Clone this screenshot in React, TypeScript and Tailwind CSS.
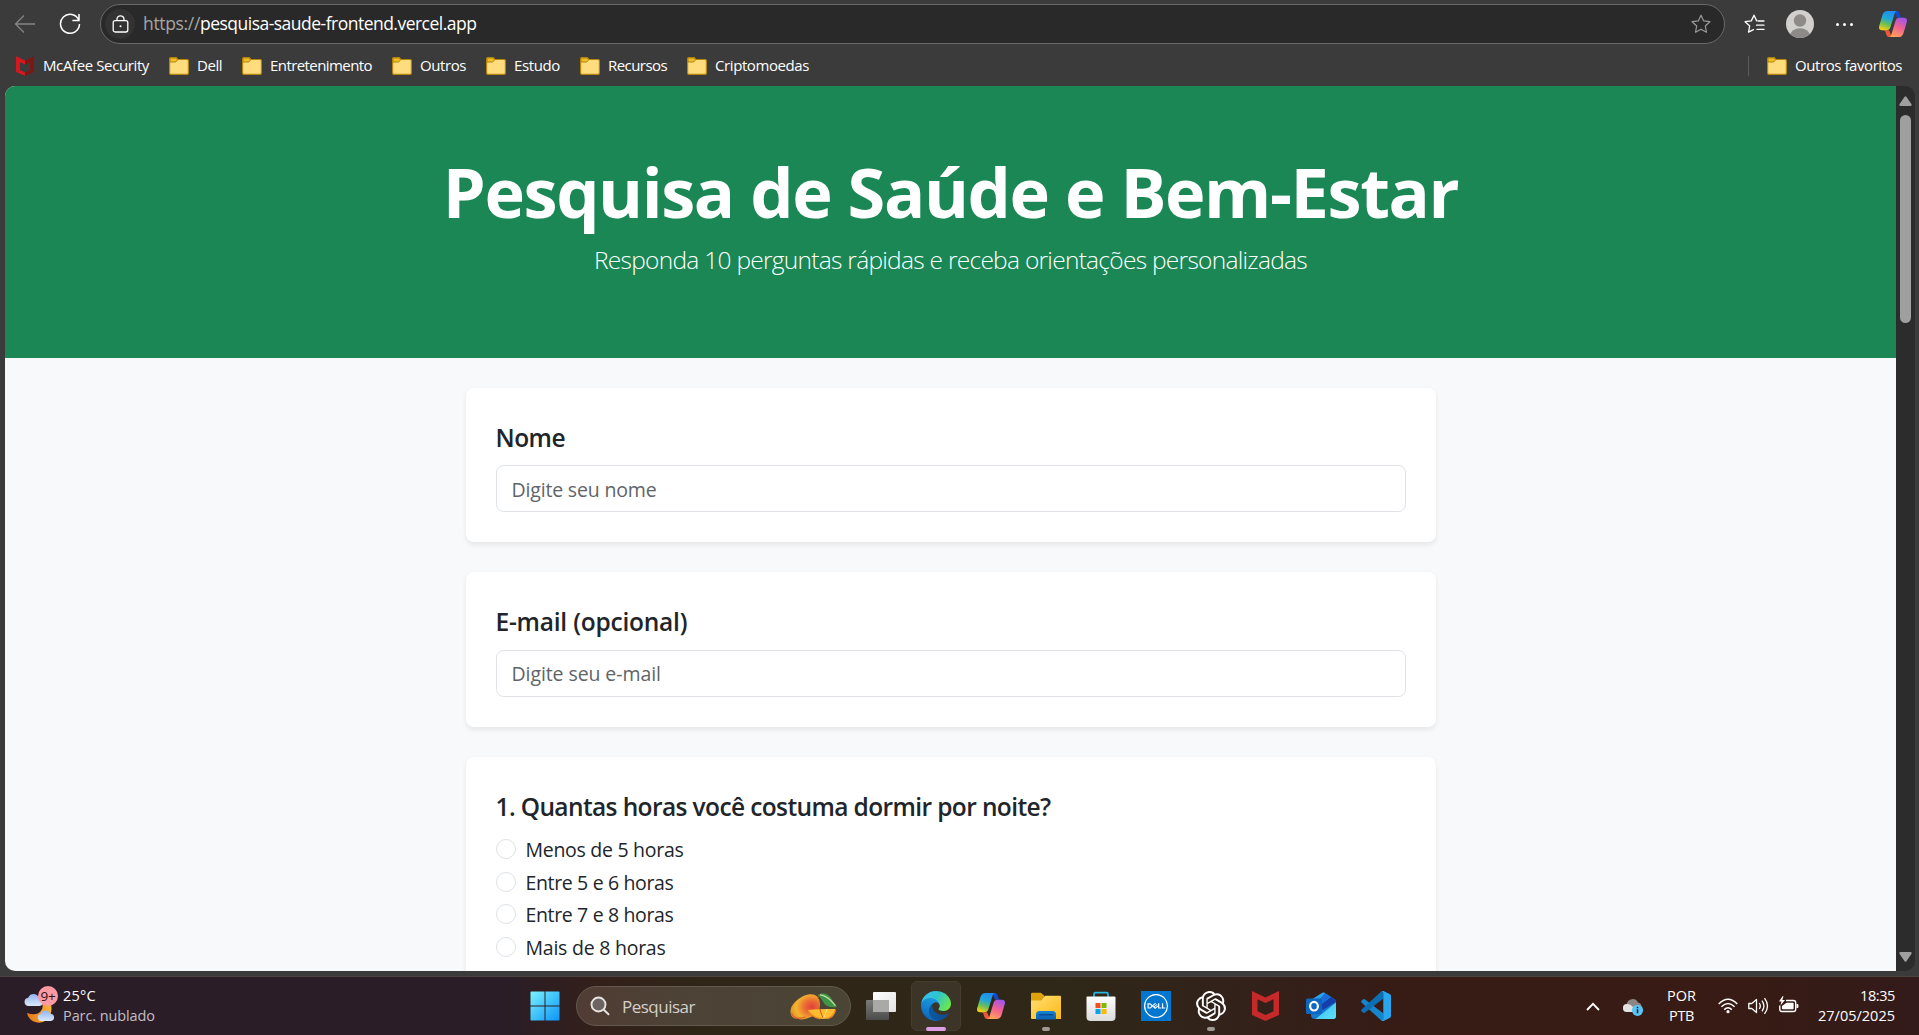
import type { ReactNode } from "react";
import { SiDell, SiOpenai } from "react-icons/si";

/* ---------- browser toolbar ---------- */

function Folder() {
  return (
    <svg width="20" height="18" viewBox="0 0 20 18" className="shrink-0">
      <path d="M.6 2q0-1.4 1.4-1.4h5.2l1.6 1.9H18q1.4 0 1.4 1.4V16q0 1.4-1.4 1.4H2Q.6 17.400.6 16Z" fill="#ffdc7d" stroke="#b3850c" strokeWidth="1.2" />
      <path d="M1 5V2q0-1 1-1h5l1.500 1.700L7.200 4.600Q6.900 5 6.300 5Z" fill="#f3bd24" stroke="#b3850c" strokeWidth="1" />
    </svg>
  );
}

function McAfeeSmall() {
  return (
    <svg width="18" height="20" viewBox="0 0 18 20" className="shrink-0">
      <path d="M0 .3 9 4.500v4L4 6.300v8L9 16.200V19.700L0 16Z" fill="#d3181f" />
      <path d="M18 .3 9 4.500v4l5-2.200v8L9 16.200V19.700L18 16Z" fill="#7d1714" />
    </svg>
  );
}

function Copilot({ size }: { size: number }) {
  return (
    <svg width={size} height={(size * 26) / 28} viewBox="0 0 28 26" className="shrink-0">
      <defs>
        <linearGradient id="cpA" x1="0.6" y1="0" x2="0.3" y2="1">
          <stop offset="0" stopColor="#1d8df2" />
          <stop offset="0.4" stopColor="#21a7d6" />
          <stop offset="0.7" stopColor="#6fbf52" />
          <stop offset="1" stopColor="#f4d016" />
        </linearGradient>
        <linearGradient id="cpB" x1="0.7" y1="0" x2="0.3" y2="1">
          <stop offset="0" stopColor="#a455e8" />
          <stop offset="0.5" stopColor="#f2628f" />
          <stop offset="1" stopColor="#ffa45b" />
        </linearGradient>
      </defs>
      <path d="M15 0h3q2 0 2.700 2.200l.9 3q.4 1.600 2.400 1.600h-6Z" fill="#1748c9" />
      <path d="M13 26h-3q-2 0-2.700-2.200l-.9-3Q6 19.200 4 19.200h6Z" fill="#f0573a" />
      <path d="M8.500 0H18q-1.800.4-2.400 2.600L11.500 16q-1 3.200-4 3.200H3.200Q-.8 19.200.2 15L3.600 3.600Q4.800 0 8.500 0Z" fill="url(#cpA)" />
      <path d="M19.500 26H10q1.800-.4 2.400-2.600L16.500 10q1-3.200 4-3.200h4.300q4 0 3 4.200l-3.400 11.400Q23.200 26 19.500 26Z" fill="url(#cpB)" />
    </svg>
  );
}

const STAR = "M10 1.200l2.700 5.700 6.200.8-4.600 4.300 1.200 6.200L10 15.200l-5.500 3 1.200-6.200L1.100 7.700l6.200-.8Z";

function Toolbar() {
  return (
    <div className="flex h-12 items-center">
      <svg width="22" height="20" viewBox="0 0 22 20" className="ml-[14px]" fill="none" stroke="#858585" strokeWidth="1.3">
        <path d="M21 10H1.500M10 1.500 1.500 10l8.500 8.500" />
      </svg>
      <svg width="22" height="22" viewBox="0 0 22 22" className="ml-[23px]" fill="none" stroke="#fff" strokeWidth="1.5">
        <path d="M19.800 7.200A9.500 9.500 0 1 0 20.500 11M20 1v6.600h-6.600" />
      </svg>
      <div className="ml-[19px] flex h-10 w-[1625px] items-center rounded-full border border-[#6a6a6a] bg-[#292929]">
        <span className="ml-1 flex size-[30px] items-center justify-center rounded-full bg-[#333]">
          <svg width="17" height="18" viewBox="0 0 17 18" fill="none" stroke="#fff" strokeWidth="1.3">
            <rect x="1.200" y="5.600" width="14.600" height="11.400" rx="2" />
            <path d="M5 5.500V4.300a3.500 3.500 0 0 1 7 0v1.200" />
            <circle cx="8.500" cy="11.300" r="1" fill="#fff" stroke="none" />
          </svg>
        </span>
        <span className="-mt-[2px] ml-2 text-[17.5px] text-white">
          <span className="tracking-[-0.0192em] text-[#a6a6a6]">https://</span>
          <span className="tracking-[-0.0294em]">pesquisa-saude-frontend.vercel.app</span>
        </span>
        <svg width="20" height="20" viewBox="0 0 20 20" className="mr-[13px] ml-auto" fill="none" stroke="#9a9a9a" strokeWidth="1.2" strokeLinejoin="round">
          <path d={STAR} />
        </svg>
      </div>
      <svg width="21" height="20" viewBox="0 0 21 20" className="ml-[19px]" fill="none" stroke="#fff" strokeWidth="1.300" strokeLinejoin="round" strokeLinecap="round">
        <path d="M12.700 6.900 10 1.200 7.300 6.900l-6.200.8 4.600 4.300-1.200 6.200L9.500 15.600M14 7h6M12.500 11.200H20M13 15.400h7" />
      </svg>
      <svg width="28" height="28" viewBox="0 0 28 28" className="ml-[21px]">
        <defs>
          <clipPath id="avatar">
            <circle cx="14" cy="14" r="14" />
          </clipPath>
        </defs>
        <g clipPath="url(#avatar)">
          <rect width="28" height="28" fill="#d2d0ce" />
          <circle cx="14" cy="10.500" r="6.200" fill="#8d8a87" />
          <ellipse cx="14" cy="26" rx="10" ry="7.800" fill="#8d8a87" />
        </g>
      </svg>
      <div className="ml-[22px] flex gap-1">
        <i className="size-[3px] rounded-full bg-white" />
        <i className="size-[3px] rounded-full bg-white" />
        <i className="size-[3px] rounded-full bg-white" />
      </div>
      <div className="ml-[26px]">
        <Copilot size={28} />
      </div>
    </div>
  );
}

const bookmarks = [
  { name: "Dell", track: "tracking-[-0.0315em]" },
  { name: "Entretenimento", track: "tracking-[-0.0385em]" },
  { name: "Outros", track: "tracking-[-0.028em]" },
  { name: "Estudo", track: "tracking-[-0.0248em]" },
  { name: "Recursos", track: "tracking-[-0.0376em]" },
  { name: "Criptomoedas", track: "tracking-[-0.0273em]" },
];

function Bookmarks() {
  return (
    <div className="flex h-[38px] items-center gap-5 pr-[17px] pb-[2px] pl-4 text-[15px] text-white">
      <div className="flex items-center gap-[9px]">
        <McAfeeSmall />
        <span className="-mt-[2px] tracking-[-0.0256em]">McAfee Security</span>
      </div>
      {bookmarks.map((b) => (
        <div key={b.name} className="flex items-center gap-2">
          <Folder />
          <span className={`-mt-[2px] ${b.track}`}>{b.name}</span>
        </div>
      ))}
      <div className="ml-auto flex items-center">
        <div className="mr-[18px] h-5 w-px bg-[#5c5c5c]" />
        <Folder />
        <span className="-mt-[2px] ml-2 tracking-[-0.0281em]">Outros favoritos</span>
      </div>
    </div>
  );
}

/* ---------- survey page ---------- */

function Card({ title, track, gap, children }: { title: string; track: string; gap: string; children: ReactNode }) {
  return (
    <section className={`flex flex-col rounded-lg bg-white p-[30px] shadow-[0_2.5px_5px_rgba(0,0,0,0.075)] ${gap}`}>
      <h2 className={`text-[24.5px] leading-[39px] font-semibold whitespace-nowrap text-[#212529] ${track}`}>{title}</h2>
      {children}
    </section>
  );
}

function Field({ placeholder, track }: { placeholder: string; track: string }) {
  return (
    <input
      placeholder={placeholder}
      className={`h-[47px] w-full rounded-[7.500px] border border-[#dee2e6] bg-white px-[15px] text-[19.500px] outline-none placeholder:text-[#5f6468] ${track}`}
    />
  );
}

const hours = [
  { text: "Menos de 5 horas", track: "tracking-[-0.0144em]" },
  { text: "Entre 5 e 6 horas", track: "tracking-[-0.018em]" },
  { text: "Entre 7 e 8 horas", track: "tracking-[-0.018em]" },
  { text: "Mais de 8 horas", track: "tracking-[-0.0123em]" },
];

function Survey() {
  return (
    <main className="min-w-0 flex-1 overflow-hidden bg-[#f8f9fb]">
      <header className="h-[272px] bg-[#1a8754] pt-[64px] text-center text-white">
        <h1 className="text-[68.500px] leading-[84px] font-bold tracking-[-0.0205em] whitespace-nowrap">Pesquisa de Saúde e Bem-Estar</h1>
        <p className="mt-[7px] text-[24.500px] leading-[37px] font-light tracking-[-0.0295em]">
          Responda 10 perguntas rápidas e receba orientações personalizadas
        </p>
      </header>
      <div className="mx-auto mt-[30px] flex w-[970px] flex-col gap-[30px]">
        <Card title="Nome" track="tracking-[-0.022em]" gap="gap-2">
          <Field placeholder="Digite seu nome" track="pt-[2px] tracking-[-0.0086em]" />
        </Card>
        <Card title="E-mail (opcional)" track="tracking-[-0.009em]" gap="gap-[9px]">
          <Field placeholder="Digite seu e-mail" track="pt-0 tracking-[-0.0044em]" />
        </Card>
        <Card title="1. Quantas horas você costuma dormir por noite?" track="tracking-[-0.025em]" gap="gap-2">
          <div className="flex flex-col gap-[2.700px]">
            {hours.map((h) => (
              <label key={h.text} className="flex h-[30px] items-center gap-[10px] text-[19.500px] leading-[30px] text-[#212529]">
                <span className="size-5 rounded-full border border-[#dee2e6] bg-white" />
                <span className={`pt-[2px] ${h.track}`}>{h.text}</span>
              </label>
            ))}
          </div>
        </Card>
      </div>
    </main>
  );
}

function Scrollbar() {
  return (
    <div className="flex w-[19px] flex-col items-center bg-[#2c2c2c] pt-[10px] pb-[9px]">
      <svg width="13" height="10" viewBox="0 0 13 10" fill="#9f9f9f">
        <path d="M5.600.7q.9-1.100 1.800 0l5 7.300q.8 1.800-.9 2H1.500Q-.2 9.800.6 8Z" />
      </svg>
      <div className="mt-[9px] h-[208px] w-[11px] rounded-full bg-[#9f9f9f]" />
      <svg width="13" height="10" viewBox="0 0 13 10" fill="#9f9f9f" className="mt-auto">
        <path d="M5.600 9.300q.9 1.100 1.800 0l5-7.300q.8-1.800-.9-2H1.500Q-.2.200.6 2Z" />
      </svg>
    </div>
  );
}

/* ---------- taskbar ---------- */

function Weather() {
  return (
    <div className="relative h-9 w-[34px]">
      <svg width="34" height="36" viewBox="0 0 34 36">
        <defs>
          <linearGradient id="cloud" x1="0" y1="0" x2="0" y2="1">
            <stop offset="0" stopColor="#8fb4f2" />
            <stop offset="1" stopColor="#dce8fb" />
          </linearGradient>
          <linearGradient id="moon" x1="0" y1="0" x2="1" y2="0">
            <stop offset="0" stopColor="#e8761a" />
            <stop offset="1" stopColor="#f8b43a" />
          </linearGradient>
        </defs>
        <path d="M3 25q9 3 13-1t2-8l9 0q2 10-4 15.500T8.500 33Q4 30 3 25Z" fill="url(#moon)" />
        <path d="M4 18a4.200 4.200 0 0 1 .2-8.300 5.600 5.600 0 0 1 10.600 0A4.200 4.200 0 0 1 15.500 18Z" fill="url(#cloud)" />
        <path d="M16.500 33a3.800 3.800 0 0 1 0-7.300 5.300 5.300 0 0 1 9.800 0h.700a3.700 3.700 0 0 1 0 7.300Z" fill="url(#cloud)" />
      </svg>
      <span className="absolute -top-[2px] left-[14px] flex size-5 items-center justify-center rounded-full bg-[#ff99a4] text-[13.500px] leading-5 tracking-[-0.02em] text-[#2a1418]">9+</span>
    </div>
  );
}

function Mango() {
  return (
    <svg width="48" height="27" viewBox="0 0 48 27">
      <defs>
        <radialGradient id="mango" cx="0.72" cy="0.5" r="0.7">
          <stop offset="0" stopColor="#e0403a" />
          <stop offset="0.350" stopColor="#ea6a34" />
          <stop offset="0.750" stopColor="#f3b52e" />
          <stop offset="1" stopColor="#e59a2a" />
        </radialGradient>
      </defs>
      <path d="M1 22Q-1 15 5 9T18 1.500q11-1.500 12 8.500T21 24t-13 1.500Q3 26.500 1 22Z" fill="url(#mango)" />
      <path d="M1.500 20q1 4 5 5t9-1" fill="none" stroke="#d9532f" strokeWidth="1.600" opacity=".7" />
      <path d="M28.500 1v5" stroke="#7b5a2c" strokeWidth="1.200" />
      <path d="M28 2q6-4 12 1.500Q43 8 47 14q-8 1-12.500-3Q31 5 28 2Z" fill="#3f9445" />
      <path d="M30 1.800q7 0 15.500 10.800" fill="none" stroke="#bfe0a8" strokeWidth="1.300" />
      <path d="M18 17q13-1.500 27.500-1-1.500 8-8 9.500-13 2.500-19.500-8.500Z" fill="#ffbc2e" />
      <path d="M18.500 18.500q6.500 7.500 12 6.900M45.300 17q-2 7.500-8 8.500" fill="none" stroke="#f08a26" strokeWidth="1.500" />
      <path d="M30 16.200q1 5 3.500 9.400" stroke="#c95a1a" fill="none" />
      <path d="M37 16q-1.500 5-3.500 9.400" stroke="#ffe27a" fill="none" />
    </svg>
  );
}

function WindowsLogo() {
  return (
    <svg width="30" height="30" viewBox="0 0 30 30">
      <defs>
        <linearGradient id="win" x1="0" y1="0" x2="30" y2="30" gradientUnits="userSpaceOnUse">
          <stop offset="0" stopColor="#7df3ff" />
          <stop offset="0.500" stopColor="#41c3fb" />
          <stop offset="1" stopColor="#0b93f8" />
        </linearGradient>
      </defs>
      <path d="M1.200.5H14.500v14H.5V1.200q0-.7.700-.7ZM15.500.5h13.300q.7 0 .7.700v13.300h-14ZM.5 15.500h14v14H1.200q-.7 0-.7-.7ZM15.500 15.500h14v13.300q0 .7-.7.700H15.500Z" fill="url(#win)" />
    </svg>
  );
}

function TaskView() {
  return (
    <svg width="30" height="28" viewBox="0 0 30 28">
      <defs>
        <linearGradient id="tvB" x1="0" y1="0" x2="0" y2="1">
          <stop offset="0" stopColor="#7a7a78" />
          <stop offset="1" stopColor="#4c4c4b" />
        </linearGradient>
        <linearGradient id="tvF" x1="0" y1="0" x2="1" y2="1">
          <stop offset="0" stopColor="#fff" />
          <stop offset="1" stopColor="#e2e2e2" />
        </linearGradient>
      </defs>
      <rect x="0" y="8" width="23" height="20" rx="1" fill="url(#tvB)" />
      <rect x="7" y="0" width="23" height="20" rx="1" fill="url(#tvF)" />
      <path d="M7 8h16v12H8q-1 0-1-1Z" fill="#a9a9a8" />
    </svg>
  );
}

function Edge() {
  return (
    <svg width="30" height="30" viewBox="0 0 256 256">
      <defs>
        <linearGradient id="edA" x1="0" y1="0" x2="1" y2="0">
          <stop offset="0" stopColor="#0c59a4" />
          <stop offset="1" stopColor="#114a8b" />
        </linearGradient>
        <linearGradient id="edB" x1="0.700" y1="0" x2="0.300" y2="1">
          <stop offset="0" stopColor="#1b9de2" />
          <stop offset="0.500" stopColor="#1583d0" />
          <stop offset="1" stopColor="#0c62b0" />
        </linearGradient>
        <linearGradient id="edC" x1="0.100" y1="0.200" x2="1" y2="0.600">
          <stop offset="0" stopColor="#35c1f1" />
          <stop offset="0.450" stopColor="#2fc5cb" />
          <stop offset="1" stopColor="#6ae84e" />
        </linearGradient>
      </defs>
      <path fill="url(#edA)" d="M231 190.500c-3.400 1.800-6.900 3.400-10.500 4.700a101.500 101.500 0 0 1-35.900 6.400c-47.300 0-88.500-32.500-88.500-74.300a31.500 31.500 0 0 1 16.400-27.300c-42.800 1.800-53.800 46.400-53.800 72.500 0 73.900 68.100 81.400 82.800 81.400 7.900 0 19.800-2.300 27-4.600l1.300-.4a128.300 128.300 0 0 0 66.600-52.800 4 4 0 0 0-5.400-5.600z" />
      <path fill="url(#edB)" d="M105.700 241.400a79.200 79.200 0 0 1-22.700-21.300 80.700 80.700 0 0 1 29.500-120c3.200-1.500 8.500-4.200 15.600-4.100a32.400 32.400 0 0 1 25.700 13 31.900 31.900 0 0 1 6.300 18.700c0-.2 24.500-79.600-80-79.600-43.900 0-80 41.600-80 78.200a130.200 130.200 0 0 0 12.100 56 128 128 0 0 0 156.400 67 75.500 75.500 0 0 1-62.800-8z" />
      <path fill="url(#edC)" d="M152.300 148.900c-.9 1-3.400 2.500-3.400 5.600 0 2.600 1.700 5.200 4.800 7.300 14.300 10 41.400 8.600 41.500 8.600a59.600 59.600 0 0 0 30.300-8.300 61.400 61.400 0 0 0 30.400-52.900c.3-22.400-8-37.300-11.300-43.900C223.500 23.900 177.700 0 128 0A128 128 0 0 0 0 126.200c.5-36.500 36.800-66 80-66 3.500 0 23.500.3 42 10.100 16.300 8.600 24.900 18.900 30.800 29.200 6.200 10.700 7.300 24.100 7.300 29.500 0 5.300-2.700 13.300-7.800 19.900z" />
    </svg>
  );
}

function Explorer() {
  return (
    <svg width="30" height="28" viewBox="0 0 30 28">
      <defs>
        <linearGradient id="exF" x1="0" y1="0" x2="1" y2="1">
          <stop offset="0" stopColor="#ffe076" />
          <stop offset="1" stopColor="#fdb813" />
        </linearGradient>
        <linearGradient id="exB" x1="0" y1="0" x2="0" y2="1">
          <stop offset="0" stopColor="#1683d6" />
          <stop offset="1" stopColor="#0b61b3" />
        </linearGradient>
      </defs>
      <path d="M0 2Q0 .8 1.200.8h8.300q.8 0 1.300.6L13.500 4V10H0Z" fill="#dea30c" />
      <path d="M0 8.500h10.500L14 3.800h15q1 0 1 1V27H1q-1 0-1-1Z" fill="url(#exF)" />
      <path d="M5 27.500v-5Q5 19 8.500 19h13q3.500 0 3.500 3.500v5Z" fill="url(#exB)" />
      <path d="M8.500 22.800h13" stroke="#0a4c92" strokeWidth="1.400" strokeLinecap="round" />
    </svg>
  );
}

function Store() {
  return (
    <svg width="30" height="30" viewBox="0 0 30 30">
      <defs>
        <linearGradient id="stB" x1="0" y1="0" x2="0" y2="1">
          <stop offset="0" stopColor="#fdfdfd" />
          <stop offset="1" stopColor="#dcdcdc" />
        </linearGradient>
      </defs>
      <path d="M8 6V3q0-1.300 1.300-1.300h11.400Q22 1.700 22 3v3" fill="none" stroke="#28b5e8" strokeWidth="1.700" />
      <path d="M.5 6.500q0-1 1-1h27q1 0 1 1V26q0 4-4 4h-21q-4 0-4-4Z" fill="url(#stB)" />
      <path d="M9.500 12h5v5h-5Z" fill="#f25022" />
      <path d="M15.500 12h5v5h-5Z" fill="#7fba00" />
      <path d="M9.500 18h5v5h-5Z" fill="#00a4ef" />
      <path d="M15.500 18h5v5h-5Z" fill="#ffb900" />
    </svg>
  );
}

function McAfee() {
  return (
    <svg width="27" height="30" viewBox="0 0 27 30">
      <path d="M0 0 13.500 6.500 27 0V24L13.500 30 0 24ZM5.500 8.200V20.300L13.500 24l8-3.700V8.200l-8 3.800Z" fill="#c5292a" />
    </svg>
  );
}

function Outlook() {
  return (
    <svg width="30" height="28" viewBox="0 0 30 28">
      <defs>
        <linearGradient id="olA" x1="0" y1="0" x2="1" y2="1">
          <stop offset="0" stopColor="#39b8ee" />
          <stop offset="1" stopColor="#5de5f8" />
        </linearGradient>
      </defs>
      <path d="M5 8 16 1q1.500-1 3 0l10 6.500q1 .8 1 2V24q0 3-3 3H9q-4 0-4-4Z" fill="#1778d0" />
      <path d="M5 8 16 1q1.500-1 3 0L9 12.500H5Z" fill="#2da2e6" />
      <path d="M13 14 25 5l4 2.700q1 .8 1 2L17 18Z" fill="#153fa8" />
      <path d="M10 10 20 1.700 25 5 13 14Z" fill="#1a6ed8" />
      <path d="M30 10.500V24q0 3-3 3H9.500Z" fill="url(#olA)" />
      <rect x="0" y="6.500" width="16" height="15.500" rx="1.500" fill="#0f66c0" />
      <ellipse cx="8" cy="14.200" rx="3.900" ry="4.300" fill="none" stroke="#fff" strokeWidth="2.200" />
    </svg>
  );
}

function VSCode() {
  return (
    <svg width="30" height="30" viewBox="0 0 30 30">
      <path d="M.5 9.700 2.300 8.200q.8-.5 1.500 0L22.500 22.500V30q-1.500.2-2.500-.8L.5 11.400Q0 10.500.5 9.700Z" fill="#1585cc" />
      <path d="M.5 20.300l1.800 1.500q.8.500 1.500 0L22.500 7.500V0Q21-.2 20 .8L.5 18.600q-.5.900 0 1.700Z" fill="#0c6fb3" />
      <path d="M22.500 0 28.600 3q1.400.7 1.400 2v20q0 1.300-1.400 2L22.500 30q-1.200.2-2.200-.7 1.700.6 2-1.300V2Q22 .1 20.300.7q1-.9 2.200-.7Z" fill="#2aa6f0" />
    </svg>
  );
}

function Slot({ children, mark }: { children: ReactNode; mark?: boolean }) {
  return (
    <div className="relative flex h-[50px] w-[55px] items-center justify-center">
      {children}
      {mark && <span className="absolute bottom-0 h-1 w-2 rounded-full bg-[#a09a95]" />}
    </div>
  );
}

function Tray() {
  return (
    <div className="flex h-full items-center text-[14.500px] leading-5 text-white">
      <svg width="14" height="9" viewBox="0 0 14 9" fill="none" stroke="#fff" strokeWidth="1.800">
        <path d="M1 8 7 1.800 13 8" />
      </svg>
      <svg width="21" height="18" viewBox="0 0 21 18" className="mt-[2px] ml-[23px]">
        <path d="M4 14a4 4 0 0 1-.3-8A6 6 0 0 1 15 4.500 4.500 4.500 0 0 1 16 13Z" fill="#8d8583" />
        <path d="M4 14a4 4 0 0 1 0-8q3.500-.4 5.500 2.500L14 14Z" fill="#e4e1df" />
        <circle cx="14.500" cy="12.300" r="5.600" fill="#5bc4f4" />
        <path d="M14.500 11.300v4M14.500 8.800v1.400" stroke="#12222c" strokeWidth="1.500" />
      </svg>
      <div className="ml-[23px] text-center">
        <div className="tracking-[0.001em]">POR</div>
        <div className="tracking-[-0.0248em]">PTB</div>
      </div>
      <svg width="20" height="16" viewBox="0 0 20 16" className="ml-[22px]" fill="none" stroke="#fff" strokeWidth="1.500">
        <path d="M.7 6q9.300-9.500 18.600 0M3.400 8.800q6.600-6.600 13.200 0M6.200 11.600q3.800-3.600 7.600 0" />
        <circle cx="10" cy="13.700" r="1.600" fill="#fff" stroke="none" />
      </svg>
      <svg width="21" height="18" viewBox="0 0 21 18" className="ml-[10px]" fill="none" stroke="#fff" strokeWidth="1.300" strokeLinejoin="round">
        <path d="M.8 6.500v5h3L8.500 15.500v-13L3.800 6.500ZM11.300 6q2 3 0 6M14 3.700q3.800 5.300 0 10.600M16.500 1.200q6 7.800 0 15.600" />
      </svg>
      <svg width="21" height="18" viewBox="0 0 21 18" className="-mt-[3px] ml-[9px]">
        <path d="M8 4.500h7.500q2.200 0 2.200 2.200v6.600q0 2.200-2.200 2.200H4q-2.200 0-2.200-2.200V9.500" fill="none" stroke="#fff" strokeWidth="1.400" />
        <path d="M8.500 6.700h6.300q.8 0 .8.800v5q0 .8-.8.800H4.800q-.8 0-.8-.8V10Z" fill="#fff" />
        <path d="M18.500 8h1q.9 0 .9 1v2q0 1-.9 1h-1Z" fill="#fff" />
        <path d="M4.500.3 1 5.500h2.500L2.500 9.500 7 4H4.300L5.500.3Z" fill="#fff" />
      </svg>
      <div className="ml-[19px] text-right">
        <div className="tracking-[-0.0274em]">18:35</div>
        <div>27/05/2025</div>
      </div>
    </div>
  );
}

function Taskbar() {
  return (
    <footer className="flex h-[59px] items-center border-t border-[#4a4340] bg-[linear-gradient(90deg,#2a1d27_0px,#2a1d27_500px,#33201a_600px,#2f2617_700px,#2f2718_1080px,#33211a_1250px,#371b15_1400px,#371b14_1750px,#331b1b_1919px)] pr-6 pl-6">
      <div className="flex w-[497px] items-center gap-[5px] text-[14.500px] leading-5">
        <Weather />
        <div>
          <div className="tracking-[0.018em] text-white">25°C</div>
          <div className="tracking-[-0.0064em] text-[#c3bec2]">Parc. nublado</div>
        </div>
      </div>
      <div className="mr-auto flex items-center">
        <div className="ml-[9px]">
          <WindowsLogo />
        </div>
        <div className="ml-4 flex h-10 w-[275px] items-center rounded-full border border-[#635a4f] bg-[linear-gradient(90deg,#513c34,#4d4236_35%,#4a4535)] pr-3 pl-[13px]">
          <svg width="20" height="20" viewBox="0 0 20 20" fill="#6b6460" stroke="#e6e3e0" strokeWidth="1.900" strokeLinecap="round">
            <circle cx="8.500" cy="8.500" r="7" />
            <path d="m13.800 13.800 4.700 4.500" />
          </svg>
          <span className="mt-px ml-3 text-[17px] tracking-[-0.0294em] text-[#d5d0cb]">Pesquisar</span>
          <div className="ml-auto">
            <Mango />
          </div>
        </div>
        <div className="ml-[2px] flex">
          <Slot>
            <TaskView />
          </Slot>
          <div className="relative mx-[2.500px] flex size-[50px] items-center justify-center rounded-md border border-[#453d2f] bg-[#3c3426]">
            <Edge />
            <span className="absolute -bottom-px h-1 w-5 rounded-full bg-[#dc9ee4]" />
          </div>
          <Slot>
            <Copilot size={28} />
          </Slot>
          <Slot mark>
            <Explorer />
          </Slot>
          <Slot>
            <Store />
          </Slot>
          <Slot>
            <span className="flex size-[30px] items-center justify-center bg-[#0076ce] text-white">
              <SiDell size={24} />
            </span>
          </Slot>
          <Slot mark>
            <SiOpenai size={30} color="#fff" />
          </Slot>
          <Slot>
            <McAfee />
          </Slot>
          <Slot>
            <Outlook />
          </Slot>
          <Slot>
            <VSCode />
          </Slot>
        </div>
      </div>
      <Tray />
    </footer>
  );
}

export default function App() {
  return (
    <div className="flex h-[1035px] w-[1919px] flex-col overflow-hidden bg-[#3b3b3b] font-['Open_Sans','Noto_Sans',sans-serif]">
      <Toolbar />
      <Bookmarks />
      <div className="mr-1 mb-[5px] ml-[5px] flex min-h-0 flex-1 overflow-hidden rounded-[10px]">
        <Survey />
        <Scrollbar />
      </div>
      <Taskbar />
    </div>
  );
}
